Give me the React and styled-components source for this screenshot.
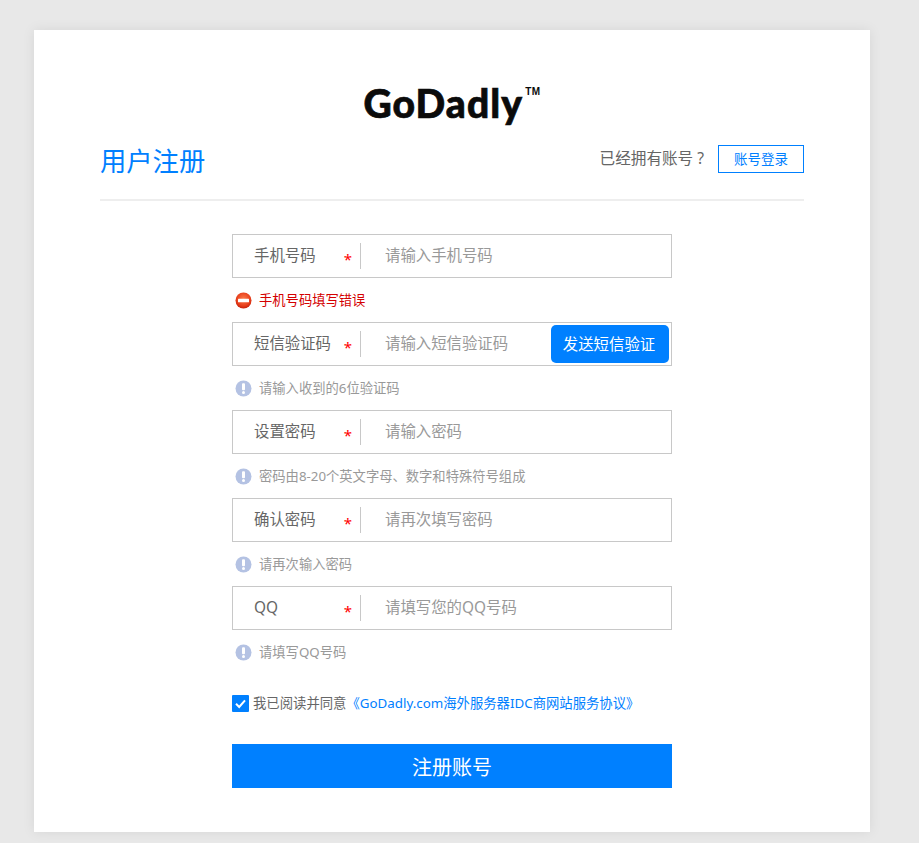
import styled, { createGlobalStyle } from 'styled-components'

const Global = createGlobalStyle`
  html, body {
    margin: 0;
    padding: 0;
    background: #e8e8e8;
    font-family: "Noto Sans", "Noto Sans CJK SC", sans-serif;
  }
  * { box-sizing: border-box; }
`
const Page = styled.div`
  width: 919px;
  height: 843px;
  padding: 30px 49px 11px 34px;
  overflow: hidden;
`
const Card = styled.div`
  width: 836px;
  height: 802px;
  background: #fff;
  padding: 0 66px;
  box-shadow: 0 0 12px rgba(0, 0, 0, 0.08);
`
const LogoRow = styled.div`
  height: 96px;
  padding-top: 47px;
  display: flex;
  justify-content: center;
`
const Logo = styled.div`
  display: flex;
  align-items: flex-start;
  height: 49px;
  color: #0b0b0b;
  font-family: Lato, "Noto Sans", sans-serif;
  font-weight: 900;
  font-size: 39px;
  line-height: 52px;
  letter-spacing: 1.1px;
  -webkit-text-stroke: 0.7px #0b0b0b;
  sup {
    font-family: "Liberation Sans", sans-serif;
    font-size: 10px;
    line-height: 10px;
    font-weight: 700;
    margin: 10px 0 0 2px;
    letter-spacing: 0.5px;
    -webkit-text-stroke: 0;
  }
`
const Header = styled.div`
  height: 75px;
  padding-top: 17px;
  display: flex;
  justify-content: space-between;
  border-bottom: 2px solid #eeeeee;
`
const Title = styled.h1`
  margin: 0;
  font-size: 26.3px;
  line-height: 36px;
  font-weight: 400;
  color: #0080ff;
`
const HeaderRight = styled.div`
  display: flex;
  align-items: flex-start;
  gap: 14px;
  padding-top: 2px;
  font-size: 15.6px;
  line-height: 27px;
  color: #666;
`
const LoginButton = styled.button`
  width: 86px;
  height: 28px;
  padding: 0;
  background: #fff;
  border: 1px solid #0080ff;
  color: #0080ff;
  font-family: inherit;
  font-size: 13.5px;
  line-height: 26px;
`
const Form = styled.div`
  width: 440px;
  margin: 33px auto 0;
`
const Field = styled.div`
  height: 44px;
  border: 1px solid #c8c8c8;
  display: flex;
  align-items: center;
  position: relative;
`
const Label = styled.div`
  width: 128px;
  height: 26px;
  padding-left: 21px;
  border-right: 1px solid #c8c8c8;
  font-size: 15.4px;
  line-height: 25px;
  color: #666;
  display: flex;
  justify-content: space-between;
`
const Star = styled.span`
  color: #f00;
  font-size: 15px;
  line-height: 33px;
  padding-right: 8px;
`
const Input = styled.input`
  flex: 1;
  min-width: 0;
  height: 100%;
  border: 0;
  outline: 0;
  padding: 0 0 2px 24px;
  background: transparent;
  font-family: inherit;
  font-size: 15.4px;
  color: #666;
  &::placeholder {
    color: #999;
    opacity: 1;
  }
`
const SendButton = styled.button`
  width: 118px;
  height: 38px;
  margin-right: 2px;
  flex-shrink: 0;
  padding: 0 2px 2px 0;
  border: 0;
  border-radius: 5px;
  background: #0080ff;
  color: #fff;
  font-family: inherit;
  font-size: 15.4px;
`
const Hint = styled.div`
  height: 44px;
  padding-left: 3px;
  display: flex;
  align-items: center;
  gap: 7px;
  font-size: 13.3px;
  color: ${p => (p.$error ? '#d40000' : '#999')};
`
const HintText = styled.span`
  margin-bottom: 2px;
`
const Agree = styled.div`
  height: 70px;
  padding-top: 21px;
  display: flex;
  align-items: flex-start;
  font-size: 13.35px;
  line-height: 16px;
  color: #666;
`
const CheckBox = styled.span`
  width: 17px;
  height: 17px;
  margin-right: 4px;
  border-radius: 1px;
  background: #0080ff;
  display: flex;
  align-items: center;
  justify-content: center;
`
const AgreeLink = styled.a`
  color: #0080ff;
  text-decoration: none;
`
const Submit = styled.button`
  display: block;
  width: 100%;
  height: 44px;
  padding: 0;
  border: 0;
  background: #0080ff;
  color: #fff;
  font-family: inherit;
  font-size: 20px;
`

const ErrorIcon = () => (
  <svg width="17" height="17" viewBox="0 0 17 17">
    <defs>
      <radialGradient id="err" cx="50%" cy="40%" r="60%">
        <stop offset="0%" stopColor="#fb7a4a" />
        <stop offset="70%" stopColor="#e8401c" />
        <stop offset="100%" stopColor="#c81f08" />
      </radialGradient>
    </defs>
    <circle cx="8.5" cy="8.5" r="8" fill="url(#err)" />
    <rect x="3" y="6.8" width="11" height="3.4" rx="0.5" fill="#fff" />
  </svg>
)

const InfoIcon = () => (
  <svg width="17" height="17" viewBox="0 0 17 17">
    <circle cx="8.5" cy="8.5" r="8" fill="#b4c2e3" />
    <rect x="7" y="3.2" width="3" height="7" rx="1" fill="#fff" />
    <circle cx="8.5" cy="12.6" r="1.5" fill="#fff" />
  </svg>
)

const fields = [
  { label: '手机号码', placeholder: '请输入手机号码', hint: '手机号码填写错误', error: true },
  { label: '短信验证码', placeholder: '请输入短信验证码', hint: '请输入收到的6位验证码', send: true },
  { label: '设置密码', placeholder: '请输入密码', hint: '密码由8-20个英文字母、数字和特殊符号组成' },
  { label: '确认密码', placeholder: '请再次填写密码', hint: '请再次输入密码' },
  { label: 'QQ', placeholder: '请填写您的QQ号码', hint: '请填写QQ号码' },
]

const App = () => {
  return (
    <Page>
      <Global />
      <Card>
        <LogoRow>
          <Logo>GoDadly<sup>TM</sup></Logo>
        </LogoRow>
        <Header>
          <Title>用户注册</Title>
          <HeaderRight>
            已经拥有账号 ?
            <LoginButton>账号登录</LoginButton>
          </HeaderRight>
        </Header>
        <Form>
          {fields.map(f => (
            <div key={f.label}>
              <Field>
                <Label>
                  {f.label}
                  <Star>*</Star>
                </Label>
                <Input placeholder={f.placeholder} />
                {f.send && <SendButton>发送短信验证</SendButton>}
              </Field>
              <Hint $error={f.error}>
                {f.error ? <ErrorIcon /> : <InfoIcon />}
                <HintText>{f.hint}</HintText>
              </Hint>
            </div>
          ))}
          <Agree>
            <CheckBox>
              <svg width="13" height="13" viewBox="0 0 13 13">
                <path d="M2 6.8 L5.2 10 L11 3.4" fill="none" stroke="#fff" strokeWidth="2" />
              </svg>
            </CheckBox>
            我已阅读并同意
            <AgreeLink href="#">《GoDadly.com海外服务器IDC商网站服务协议》</AgreeLink>
          </Agree>
          <Submit>注册账号</Submit>
        </Form>
      </Card>
    </Page>
  )
}

export default App
